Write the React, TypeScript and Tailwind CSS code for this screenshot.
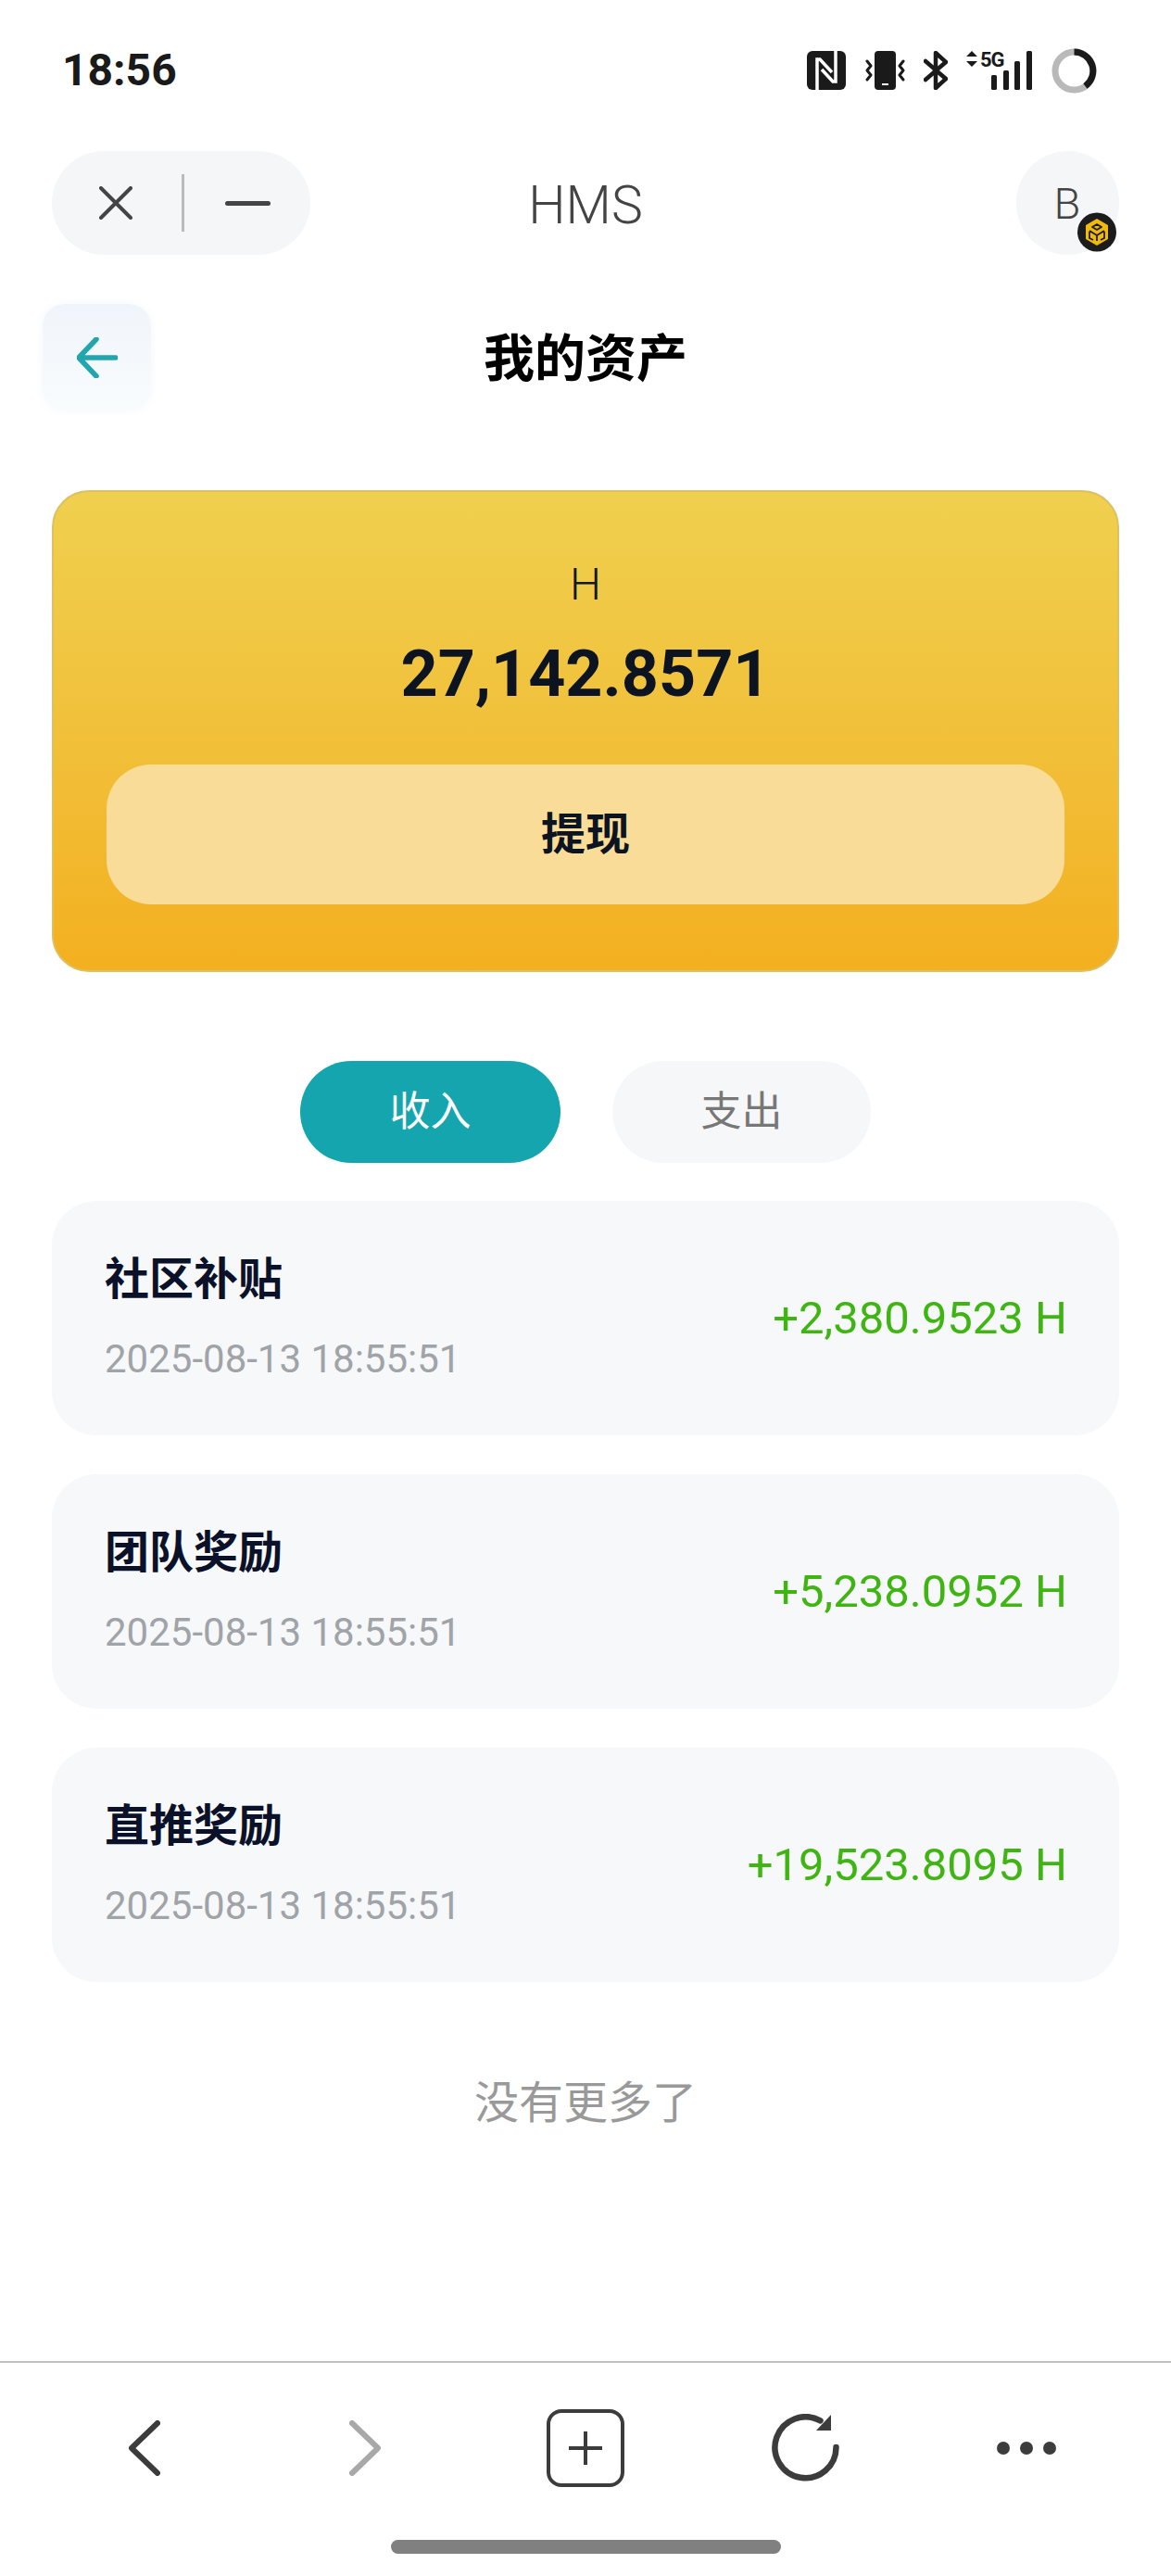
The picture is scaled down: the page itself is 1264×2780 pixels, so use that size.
// App.tsx
import React from 'react';

const FONT = "font-['Roboto','Noto_Sans_CJK_SC',sans-serif]";

const records = [
  { title: '社区补贴', time: '2025-08-13 18:55:51', amount: '+2,380.9523 H' },
  { title: '团队奖励', time: '2025-08-13 18:55:51', amount: '+5,238.0952 H' },
  { title: '直推奖励', time: '2025-08-13 18:55:51', amount: '+19,523.8095 H' },
];

function StatusIcons() {
  return (
    <div className="flex items-center">
      <svg width="42" height="42" viewBox="0 0 42 42">
        <rect width="42" height="42" rx="6" fill="#1a1a1a" />
        <path d="M11 42V9h3l13 14M31 0v33h-3L16 20" fill="none" stroke="#fff" strokeWidth="3.5" />
      </svg>
      <svg className="ml-[21px]" width="43" height="42" viewBox="0 0 43 42">
        <rect x="10" width="23" height="42" rx="4" fill="#1a1a1a" />
        <rect x="18" y="35" width="7" height="2" fill="#fff" />
        <path d="M2 11l4 5-4 5 4 5-4 5M41 11l-4 5 4 5-4 5 4 5" fill="none" stroke="#1a1a1a" strokeWidth="3" strokeLinecap="round" strokeLinejoin="round" />
      </svg>
      <svg className="ml-[20px]" width="26" height="42" viewBox="0 0 26 42">
        <path d="M2 31L24 12 13 2v38l11-10L2 11" fill="none" stroke="#1a1a1a" strokeWidth="4.5" strokeLinecap="round" strokeLinejoin="round" />
      </svg>
      <div className="ml-[20px] relative w-[71px] h-[42px]">
        <svg width="71" height="42" viewBox="0 0 71 42">
          <path d="M6 0l6 6H0zM6 17l6-6H0z" fill="#1a1a1a" />
          <rect x="27" y="26" width="6" height="16" rx="1.5" fill="#1a1a1a" />
          <rect x="40" y="21" width="6" height="21" rx="1.5" fill="#1a1a1a" />
          <rect x="52" y="11" width="6" height="31" rx="1.5" fill="#1a1a1a" />
          <rect x="65" y="0" width="6" height="42" rx="1.5" fill="#1a1a1a" />
        </svg>
        <span className="absolute left-[15px] top-[-1px] text-[22px] leading-[21px] font-bold text-[#1a1a1a] tracking-[-1px]">5G</span>
      </div>
      <svg className="ml-[21px]" width="49" height="49" viewBox="0 0 49 49">
        <circle cx="24.5" cy="24.5" r="20.5" fill="none" stroke="#b9b9b9" strokeWidth="7" />
        <path d="M24.5 4A20.5 20.5 0 0 1 36.5 41" fill="none" stroke="#1a1a1a" strokeWidth="7" />
      </svg>
    </div>
  );
}

function BnbBadge() {
  return (
    <svg className="absolute left-[66px] top-[66px]" width="42" height="43" viewBox="0 0 42 43">
      <circle cx="21" cy="21.5" r="21" fill="#1c1c1c" />
      <path d="M21 7l12 7v15l-12 7-12-7V14z" fill="#f0b90b" />
      <g fill="none" stroke="#1c1c1c" strokeWidth="1.8" strokeLinejoin="round">
        <path d="M21 13l5 3-5 3-5-3z" />
        <path d="M13 20l8 5 8-5M21 25v6M13 21v7l4 2M29 21v7l-4 2" />
      </g>
    </svg>
  );
}

function BottomNav() {
  return (
    <div className="border-t-2 border-[#c0c0c0] h-[232px] flex flex-col items-center">
      <div className="w-full grid grid-cols-5 px-[37px] mt-[49px] h-[86px] items-center justify-items-center">
        <svg width="34" height="60" viewBox="0 0 34 60">
          <path d="M31 3L3 30l28 27" fill="none" stroke="#3c3c3c" strokeWidth="6" strokeLinecap="round" strokeLinejoin="round" />
        </svg>
        <svg width="34" height="60" viewBox="0 0 34 60">
          <path d="M3 3l28 27L3 57" fill="none" stroke="#a8a8a8" strokeWidth="6" strokeLinecap="round" strokeLinejoin="round" />
        </svg>
        <div className="w-[84px] h-[84px] rounded-[16px] border-[4px] border-[#3c3c3c] flex items-center justify-center">
          <svg width="36" height="36" viewBox="0 0 36 36">
            <path d="M0 18h36M18 0v36" stroke="#3c3c3c" strokeWidth="4" strokeLinecap="round" />
          </svg>
        </div>
        <svg width="74" height="74" viewBox="0 0 74 74">
          <path d="M69.500 36A33 33 0 1 1 52.500 7.400" fill="none" stroke="#3c3c3c" strokeWidth="6.500" strokeLinecap="round" />
          <path d="M64 1v17H48z" fill="#3c3c3c" />
        </svg>
        <div className="flex gap-[11px]">
          <span className="w-[14px] h-[14px] rounded-full bg-[#3c3c3c]" />
          <span className="w-[14px] h-[14px] rounded-full bg-[#3c3c3c]" />
          <span className="w-[14px] h-[14px] rounded-full bg-[#3c3c3c]" />
        </div>
      </div>
      <div className="mt-[56px] w-[421px] h-[15px] rounded-full bg-[#808080]" />
    </div>
  );
}

export default function App() {
  return (
    <div className={`w-[1264px] h-[2780px] bg-white flex flex-col ${FONT}`}>
      <div className="flex items-center justify-between h-[50px] mt-[51px] mb-[62px] pl-[67px] pr-[80px]">
        <span className="text-[48px] leading-[50px] font-bold text-[#1a1a1a]">18:56</span>
        <StatusIcons />
      </div>

      <div className="grid grid-cols-[1fr_auto_1fr] items-center px-[56px] h-[112px]">
        <div className="flex items-center w-[279px] h-[112px] rounded-full bg-[#f4f6f8] pl-[51px]">
          <svg width="36" height="36" viewBox="0 0 36 36">
            <path d="M2 2l32 32M34 2L2 34" stroke="#444" strokeWidth="4" strokeLinecap="round" />
          </svg>
          <span className="ml-[53px] w-[3px] h-[62px] bg-[#bbbbbb]" />
          <span className="ml-[44px] w-[49px] h-[5px] rounded-full bg-[#444]" />
        </div>
        <span className="text-[57px] leading-[66px] font-light text-[#444] mt-[5px]">HMS</span>
        <div className="relative justify-self-end w-[111px] h-[112px] rounded-full bg-[#f4f6f8] flex items-center justify-center">
          <span className="text-[47px] leading-[56px] font-light text-[#444] mr-[1px] mt-[2px]">B</span>
          <BnbBadge />
        </div>
      </div>

      <div className="flex items-center justify-between px-[46px] mt-[53px] h-[115px]">
        <div className="w-[117px] h-[115px] rounded-[24px] bg-gradient-to-b from-[#f0f5fb] to-[#f9fcfd] shadow-[0_0_8px_rgba(240,245,250,0.8)] flex items-center justify-center">
          <svg width="44" height="44" viewBox="0 0 44 44">
            <path d="M42 22H3M21 2L2 22l19 20" fill="none" stroke="#22a6ae" strokeWidth="5.500" strokeLinecap="round" strokeLinejoin="round" />
          </svg>
        </div>
        <h1 className="text-[55px] leading-[64px] font-bold text-black mt-[2px]">我的资产</h1>
        <div className="w-[117px]" />
      </div>

      <div className="mx-[56px] mt-[86px] h-[520px] rounded-[40px] border-2 border-[#dcc062] bg-gradient-to-b from-[#efd04e] to-[#f3b01f] flex flex-col items-center pt-[72px]">
        <div className="text-[48px] leading-[56px] font-light text-[#111827]">H</div>
        <div className="mt-[27px] text-[70px] leading-[82px] font-bold text-[#0b1420]">27,142.8571</div>
        <button className="mt-[57px] w-[1034px] h-[151px] rounded-[48px] bg-[#f8dc97] text-[48px] font-bold text-[#0b1420]">提现</button>
      </div>

      <div className="flex justify-center gap-[56px] mt-[96px]">
        <div className="w-[281px] h-[110px] rounded-full bg-[#14a5ae] text-white text-[44px] flex items-center justify-center">收入</div>
        <div className="w-[279px] h-[110px] rounded-full bg-[#f5f7f9] text-[#777] text-[44px] flex items-center justify-center">支出</div>
      </div>

      <div className="flex flex-col gap-[42px] mx-[56px] mt-[41px]">
        {records.map((r) => (
          <div key={r.title} className="h-[253px] rounded-[48px] bg-[#f6f8fa] flex items-center justify-between pl-[57px] pr-[56px]">
            <div>
              <div className="text-[48px] leading-[56px] font-bold text-[#0a1128]">{r.title}</div>
              <div className="mt-[33px] text-[42px] leading-[50px] text-[#a0a3a7]">{r.time}</div>
            </div>
            <div className="text-[49px] leading-[54px] text-[#3fb512]">{r.amount}</div>
          </div>
        ))}
      </div>

      <div className="mt-[102px] text-center text-[48px] leading-[58px] text-[#999]">没有更多了</div>

      <div className="mt-auto">
        <BottomNav />
      </div>
    </div>
  );
}
